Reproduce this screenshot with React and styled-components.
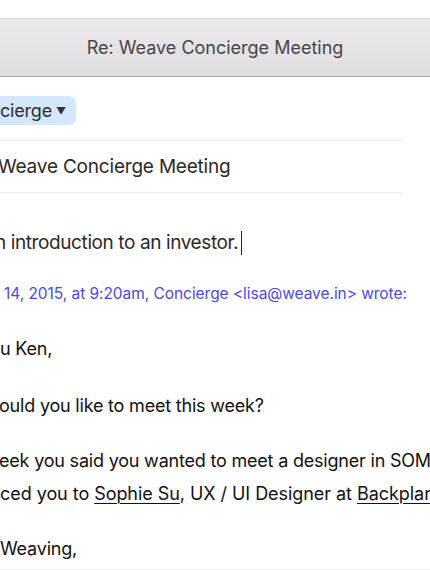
import styled, { createGlobalStyle } from "styled-components";

const Global = createGlobalStyle`
    html, body {
        margin: 0;
        padding: 0;
        background: #ffffff;
    }
    body {
        width: 430px;
        height: 570px;
        overflow: hidden;
        font-family: Inter, "Noto Sans", sans-serif;
        -webkit-font-smoothing: antialiased;
    }
`;

const Window = styled.div`
    display: flex;
    flex-direction: column;
    width: 430px;
    height: 570px;
    overflow: hidden;
    padding-top: 18px;
    box-sizing: border-box;
    border-bottom: 1px solid #ececec;
`;

const TitleBar = styled.div`
    height: 59px;
    display: flex;
    align-items: center;
    justify-content: center;
    border-top: 1px solid #d9d7da;
    border-bottom: 1px solid #a8a7a9;
    background: linear-gradient(#ebe9ec, #dfdde0);
    color: #464646;
    font-size: 18px;
    box-sizing: border-box;
`;

const Fields = styled.div`
    display: flex;
    flex-direction: column;
    width: 403px;
`;

const Field = styled.div`
    display: flex;
    align-items: center;
    height: ${(p) => p.$h}px;
    border-bottom: 1px solid #ececec;
    box-sizing: border-box;
    white-space: nowrap;
    overflow: hidden;
`;

const Chip = styled.span`
    display: inline-flex;
    align-items: center;
    gap: 4px;
    margin-left: -12px;
    margin-top: 3px;
    padding: 0 10px 0 12px;
    height: 29px;
    border-radius: 7px;
    background: #d4e7fc;
    color: #2e2e2e;
    font-size: 18px;
    letter-spacing: -0.2px;
`;

const Caret = styled.span`
    font-size: 10px;
    color: #333;
    margin-top: 1px;
`;

const Subject = styled.span`
    margin-left: ${(p) => p.$shift}px;
    color: #2a2a2a;
    font-size: 19px;
    letter-spacing: -0.2px;
`;

const Body = styled.div`
    display: flex;
    flex-direction: column;
    padding-top: 38px;
    white-space: nowrap;
    overflow: hidden;
`;

const Line = styled.div`
    margin-left: ${(p) => p.$shift || 0}px;
    margin-bottom: ${(p) => p.$gap || 0}px;
    height: ${(p) => p.$h || 24}px;
    line-height: ${(p) => p.$h || 24}px;
    font-size: ${(p) => p.$size || 18}px;
    color: ${(p) => p.$color || "#111"};
    letter-spacing: ${(p) => p.$track ?? -0.2}px;
`;

const Cursor = styled.span`
    display: inline-block;
    width: 1px;
    height: 24px;
    margin-left: 3px;
    vertical-align: -6px;
    background: #222;
`;

const Link = styled.span`
    text-decoration: underline;
    text-underline-offset: 3px;
    text-decoration-thickness: 1px;
`;

export default function App() {
    return (
        <>
            <Global />
            <Window>
                <TitleBar>Re: Weave Concierge Meeting</TitleBar>
                <Fields>
                    <Field $h={64}>
                        <Chip>
                            cierge<Caret>▼</Caret>
                        </Chip>
                    </Field>
                    <Field $h={52}>
                        <Subject $shift={-2}>Weave Concierge Meeting</Subject>
                    </Field>
                </Fields>
                <Body>
                    <Line $shift={-5} $size={19} $track={-0.4} $color="#2a2a2a" $gap={27}>
                        n introduction to an investor.<Cursor />
                    </Line>
                    <Line $shift={4} $size={15.5} $track={-0.05} $color="#4a4bdc" $gap={31}>
                        14, 2015, at 9:20am, Concierge &lt;lisa@weave.in&gt; wrote:
                    </Line>
                    <Line $gap={33}>u Ken,</Line>
                    <Line $shift={-1} $gap={31}>ould you like to meet this week?</Line>
                    <Line $shift={-1} $gap={9}>eek you said you wanted to meet a designer in SOMA</Line>
                    <Line $shift={0} $gap={31} $track={-0.05}>
                        ced you to <Link>Sophie Su</Link>, UX / UI Designer at <Link>Backplane</Link>
                    </Line>
                    <Line $shift={0}>Weaving,</Line>
                </Body>
            </Window>
        </>
    );
}
